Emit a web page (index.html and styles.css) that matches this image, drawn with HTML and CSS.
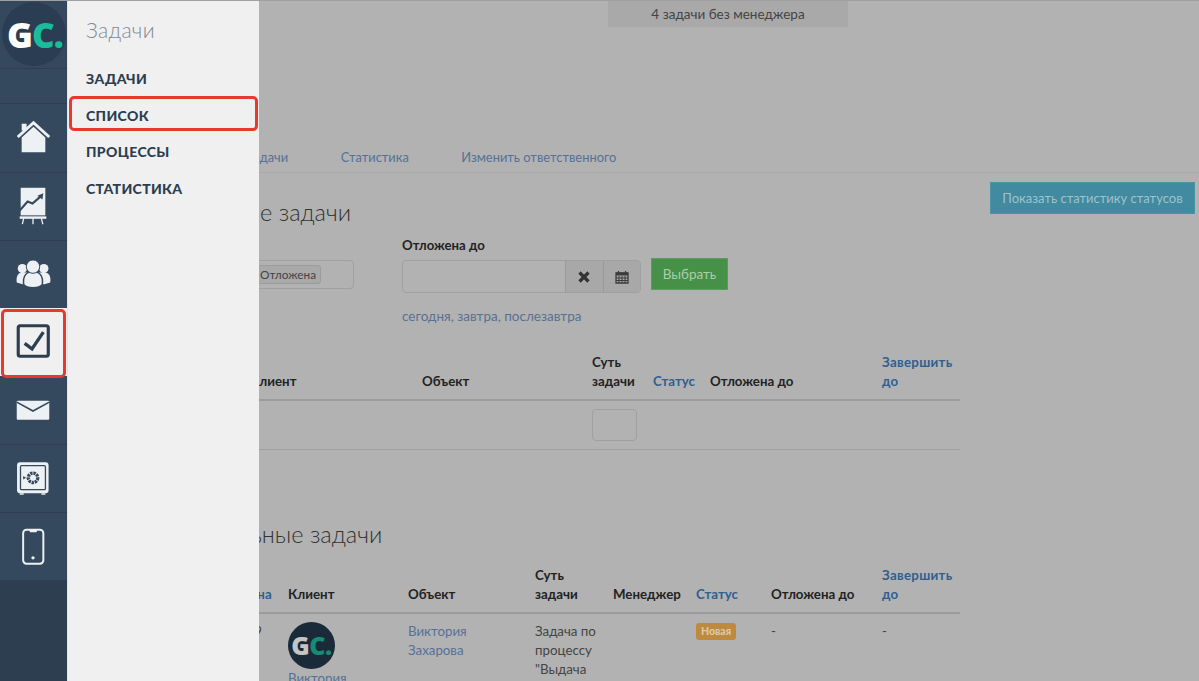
FILE: index.html
```html
<!DOCTYPE html>
<html lang="ru">
<head>
<meta charset="utf-8">
<title>Задачи</title>
<link rel="stylesheet" href="styles.css">
</head>
<body>
<div class="page">
  <nav class="sidebar">
    <div class="side-logo"><span class="logo-circle"><span class="g">G</span><span class="c">C.</span></span></div>
    <div class="side-spacer"></div>
    <div class="side-item">
      <svg class="side-icon" viewBox="0 0 68 68"><polygon class="ic-fill" points="22,34 34,23 46,34 46,49 22,49"/><rect class="ic-fill" x="22" y="20" width="5" height="7"/><polyline class="ic-line" points="18,33.5 34,19 50,33.5"/></svg>
    </div>
    <div class="side-item">
      <svg class="side-icon" viewBox="0 0 68 68"><rect class="ic-fill" x="21" y="15" width="25" height="28"/><polyline class="ic-dark" points="20,38 28,29 33,31 41,24"/><polygon class="ic-darkfill" points="38,23 44,20.5 43,27"/><rect class="ic-fill" x="20" y="44" width="27" height="2.5"/><path class="ic-thin" d="M24 46l-1.3 6M33.5 46v6M42 46l1.5 6"/></svg>
    </div>
    <div class="side-item">
      <svg class="side-icon" viewBox="0 0 68 68"><circle class="ic-fill" cx="22.7" cy="28" r="4.7"/><circle class="ic-fill" cx="44.5" cy="28" r="4.7"/><path class="ic-fill" d="M17 42c-1-7 2-10 6-10h22c4 0 7 3 6 10l-6 2H23z"/><path class="ic-body" d="M24 44c-1-9 3-13 9.500-13s10.500 4 9.500 13c-3 4.500-16 4.500-19 0z"/><circle class="ic-head" cx="33.500" cy="26" r="6.800"/></svg>
    </div>
    <div class="side-item is-active">
      <svg class="side-icon" viewBox="0 0 68 68"><rect class="ic-box" x="18.500" y="18" width="30.500" height="31" rx="2"/><polyline class="ic-check" points="25,36 32.500,41.500 44,24.500"/></svg>
    </div>
    <div class="side-item">
      <svg class="side-icon" viewBox="0 0 68 68"><rect class="ic-fill" x="17" y="25" width="33" height="19.500" rx="1"/><polyline class="ic-mail" points="17,26.500 33.500,35.500 50,26.500"/></svg>
    </div>
    <div class="side-item">
      <svg class="side-icon" viewBox="0 0 68 68"><rect class="ic-fill" x="17.300" y="17.500" width="32" height="31.500" rx="3"/><rect class="ic-safe" x="20.800" y="21" width="25.300" height="24.300" rx="1"/><circle class="ic-gear" cx="33.500" cy="33.300" r="4.800"/><polygon class="ic-darkfill" points="23.500,31.500 26.500,33.300 23.500,35"/><rect class="ic-fill" x="20" y="49" width="4" height="1.500"/><rect class="ic-fill" x="42" y="49" width="4" height="1.500"/></svg>
    </div>
    <div class="side-item">
      <svg class="side-icon" viewBox="0 0 68 68"><rect class="ic-phone" x="23.500" y="17" width="20.500" height="34.500" rx="3.500"/><rect class="ic-fill" x="30" y="17" width="7.500" height="2.500" rx="1"/><circle class="ic-fill" cx="33.500" cy="45.500" r="1.700"/></svg>
    </div>
  </nav>

  <main class="main">
    <div class="alert">4 задачи без менеджера</div>
    <div class="tabs">
      <a class="tab">Задачи</a>
      <a class="tab">Статистика</a>
      <a class="tab">Изменить ответственного</a>
    </div>
    <div class="head-row">
      <h2 class="title title-first">Отложенные задачи</h2>
      <button class="btn-info">Показать статистику статусов</button>
    </div>

    <div class="filters">
      <div class="field field-status">
        <div class="tag-input"><span class="tag">Отложена</span></div>
      </div>
      <div class="field field-date">
        <label class="label">Отложена до</label>
        <div class="date-group">
          <div class="date-input"></div>
          <div class="date-btn">
            <svg class="fa" viewBox="0 0 14 14"><path class="fa-x" d="M2.500 2.500l9 9M11.500 2.500l-9 9"/></svg>
          </div>
          <div class="date-btn">
            <svg class="fa" viewBox="0 0 14 14"><path class="fa-cal" d="M1 3h12v10H1zM3.500 1v2.500M10.500 1v2.500"/><rect class="fa-top" x="1" y="2.500" width="12" height="3"/><path class="fa-grid" d="M1 8h12M1 10.500h12M4 6v7M7 6v7M10 6v7"/></svg>
          </div>
        </div>
        <div class="quick"><a>сегодня</a>, <a>завтра</a>, <a>послезавтра</a></div>
      </div>
      <button class="btn-green">Выбрать</button>
    </div>

    <table class="grid grid-a">
      <thead>
        <tr>
          <th class="a1 link">Создана</th><th class="a2">Клиент</th><th class="a3">Объект</th><th class="a4">Суть задачи</th><th class="a5 link">Статус</th><th class="a6">Отложена до</th><th class="a7 link">Завершить до</th>
        </tr>
      </thead>
      <tbody>
        <tr><td></td><td></td><td></td><td><div class="mini-input"></div></td><td></td><td></td><td></td></tr>
      </tbody>
    </table>

    <h2 class="title title-second">Остальные задачи</h2>

    <table class="grid grid-b">
      <thead>
        <tr>
          <th class="b1">ID</th><th class="b2 link">Создана</th><th class="b3">Клиент</th><th class="b4">Объект</th><th class="b5">Суть задачи</th><th class="b6">Менеджер</th><th class="b7 link">Статус</th><th class="b8">Отложена до</th><th class="b9 link">Завершить до</th>
        </tr>
      </thead>
      <tbody>
        <tr>
          <td>1</td>
          <td class="date-cell">20.09</td>
          <td><span class="avatar"><span class="ag">G</span><span class="ac">C.</span></span><a class="cell-link">Виктория</a></td>
          <td><a class="cell-link">Виктория Захарова</a></td>
          <td>Задача по процессу "Выдача доступа"</td>
          <td></td>
          <td><span class="badge">Новая</span></td>
          <td>-</td>
          <td>-</td>
        </tr>
      </tbody>
    </table>
  </main>

  <aside class="drawer">
    <div class="drawer-title">Задачи</div>
    <a class="drawer-item">Задачи</a>
    <a class="drawer-item is-marked">Список</a>
    <a class="drawer-item">Процессы</a>
    <a class="drawer-item">Статистика</a>
  </aside>
</div>
</body>
</html>
```
FILE: styles.css
```css
* { box-sizing: border-box; }
*::after { box-sizing: border-box; }
html, body { margin: 0; height: 100%; overflow: hidden; }
body { font-family: "Lato", "Noto Sans", sans-serif; font-size: 14px; line-height: 19px; color: #444; background: #b2b2b2; }

.page { position: relative; display: flex; width: 1199px; height: 681px; overflow: hidden; border-top: 1px solid #a0a0a0; }

/* sidebar */
.sidebar { flex: 0 0 68px; width: 68px; margin-top: -1px; background: #2c3e50; border-right: 1px solid #dfe4e8; position: relative; z-index: 3; }
.side-logo { height: 69px; background: #34495e; border-bottom: 1px solid #2c3e50; padding: 2px 0 0 2px; }
.logo-circle { display: flex; align-items: center; justify-content: center; width: 64px; height: 64px; border-radius: 50%; background: #2a3d52; font-family: "Open Sans", sans-serif; font-weight: 800; font-size: 35px; letter-spacing: -1px; line-height: 64px; padding: 2px 0 0 2px; }
.g { color: #fff; }
.c { color: #1abc9c; }
.side-spacer { height: 35px; background: #34495e; border-bottom: 1px solid #2c3e50; }
.side-item { height: 68px; background: #34495e; border-top: 1px solid #2c3e50; }
.side-spacer + .side-item { border-top: 0; }
.side-item.is-active { background: #f0f0f0; border-top: 0; position: relative; }
.side-item.is-active::after { content: ""; position: absolute; left: 1px; right: 1px; top: 1px; bottom: -2px; border: 3px solid #e8392e; border-radius: 5px; }
.side-item.is-active + .side-item { border-top: 0; }
.side-icon { display: block; width: 67px; height: 67px; }
.ic-fill { fill: #edf1f3; }
.ic-line { fill: none; stroke: #edf1f3; stroke-width: 3; }
.ic-dark { fill: none; stroke: #34495e; stroke-width: 2.2; }
.ic-mail { fill: none; stroke: #34495e; stroke-width: 1.700; }
.ic-darkfill { fill: #34495e; }
.ic-thin { fill: none; stroke: #edf1f3; stroke-width: 1.300; }
.ic-body { fill: #edf1f3; stroke: #34495e; stroke-width: 1.500; }
.ic-head { fill: #edf1f3; stroke: #34495e; stroke-width: 1; }
.ic-box { fill: none; stroke: #2c3e50; stroke-width: 3.200; }
.ic-check { fill: none; stroke: #2c3e50; stroke-width: 3.400; }
.ic-safe { fill: #edf1f3; stroke: #34495e; stroke-width: 1.300; }
.ic-gear { fill: none; stroke: #34495e; stroke-width: 3.400; stroke-dasharray: 2.400 .8; }
.ic-phone { fill: none; stroke: #edf1f3; stroke-width: 2; }

/* drawer */
.drawer { position: absolute; left: 68px; top: -1px; bottom: 0; width: 191px; background: #f0f0f0; padding: 18px 0 0 18px; z-index: 2; }
.drawer-title { font-size: 21px; line-height: 24px; font-weight: 300; color: #7f8a94; margin-bottom: 25px; letter-spacing: .3px; }
.drawer-item { display: block; height: 36.600px; line-height: 24px; font-size: 14px; font-weight: 900; color: #2c3e50; text-transform: uppercase; letter-spacing: .35px; position: relative; }
.drawer-item.is-marked::after { content: ""; position: absolute; left: -17px; right: 1px; top: -8px; height: 35px; border: 3px solid #e8392e; border-radius: 5px; }

/* main */
.main { flex: 1; min-width: 0; background: #b2b2b2; }
.alert { margin-left: 540px; width: 240px; height: 26px; background: #a9a9a9; text-align: center; font-size: 13.500px; line-height: 26px; color: #444; }
.tabs { display: flex; gap: 52.500px; margin-top: 120px; height: 26px; padding-left: 178px; border-bottom: 1px solid #a8a8a8; line-height: 21px; font-size: 12.900px; }
.tab { color: #557196; }
.head-row { display: flex; justify-content: space-between; align-items: flex-start; height: 63px; padding: 9px 4px 0 0; }
.btn-info { width: 205px; height: 32px; border: 1px solid #4a94a8; background: #418a9f; color: #9fc2cd; font: 13px/20px "Lato", sans-serif; padding: 0; }
.title { margin: 0; font-weight: 300; color: #333; font-size: 23.500px; line-height: 30px; }
.title-first { margin: 15px 0 0 65px; }
.title-second { margin: 69px 0 9px 0; padding-left: 117px; }

.filters { display: flex; align-items: flex-start; height: 109px; padding-left: 32px; }
.field-status { width: 254px; margin-right: 48px; padding-top: 24px; }
.tag-input { height: 29px; border: 1px solid #a0a0a0; border-radius: 4px; display: flex; align-items: center; justify-content: flex-end; padding-right: 32px; }
.tag { border: 1px solid #9c9c9c; border-radius: 3px; background: #a9a9a9; padding: 0 4px; height: 19px; font-size: 11.800px; line-height: 17px; color: #444; }
.field-date { width: 239px; }
.label { display: block; font-weight: 700; color: #222; height: 24px; font-size: 13.200px; }
.date-group { display: flex; height: 33px; border: 1px solid #a0a0a0; border-radius: 4px; overflow: hidden; }
.date-input { flex: 1; }
.date-btn { width: 37.500px; display: flex; align-items: center; justify-content: center; background: #a8a8a8; border-left: 1px solid #9a9a9a; }
.fa { width: 14px; height: 14px; display: block; }
.fa-x { stroke: #333; stroke-width: 3.200; fill: none; }
.fa-cal { fill: none; stroke: #3c3c3c; stroke-width: 1.300; }
.fa-top { fill: #3c3c3c; }
.fa-grid { fill: none; stroke: #3c3c3c; stroke-width: 1; }
.quick { margin-top: 14px; color: #5a7091; font-size: 13.500px; }
.btn-green { margin: 22px 0 0 10px; width: 77px; height: 32px; border: 1px solid #5b9c5e; background: #479048; color: #a9cfaa; font: 13.500px/20px "Lato", sans-serif; padding: 0; }

.grid { width: 860px; margin-left: 32px; border-collapse: collapse; table-layout: fixed; font-size: 13.300px; }
.grid th { padding: 8px; text-align: left; vertical-align: bottom; font-weight: 700; color: #222; border-bottom: 2px solid #9c9c9c; }
.grid th.link { color: #2f5f8f; }
.grid th.a7, .grid th.b9 { letter-spacing: .3px; }
.grid td { padding: 8px; vertical-align: top; color: #444; border-bottom: 1px solid #a0a0a0; }
.grid td.date-cell { padding-left: 16px; }
.a1 { width: 142px; } .a2 { width: 172px; } .a3 { width: 170px; } .a4 { width: 61px; } .a5 { width: 57px; } .a6 { width: 172px; } .a7 { width: 86px; }
.b1 { width: 112px; } .b2 { width: 68px; } .b3 { width: 120px; } .b4 { width: 127px; } .b5 { width: 78px; } .b6 { width: 83px; } .b7 { width: 75px; } .b8 { width: 111px; } .b9 { width: 86px; }
.mini-input { width: 45px; height: 32px; border: 1px solid #a0a0a0; border-radius: 4px; }
.cell-link { color: #557196; }
.avatar { display: flex; align-items: center; justify-content: center; width: 47px; height: 47px; border-radius: 50%; background: #1b2a38; font-family: "Open Sans", sans-serif; font-weight: 800; font-size: 25px; letter-spacing: -.5px; }
.ag { color: #c4c4c4; }
.ac { color: #168c75; }
.badge { display: inline-block; height: 17px; padding: 0 5px; border-radius: 3px; background: #bd8a3f; color: #dcc8a8; font-size: 10.500px; line-height: 17px; font-weight: 900; vertical-align: top; margin-top: 1px; }
```
